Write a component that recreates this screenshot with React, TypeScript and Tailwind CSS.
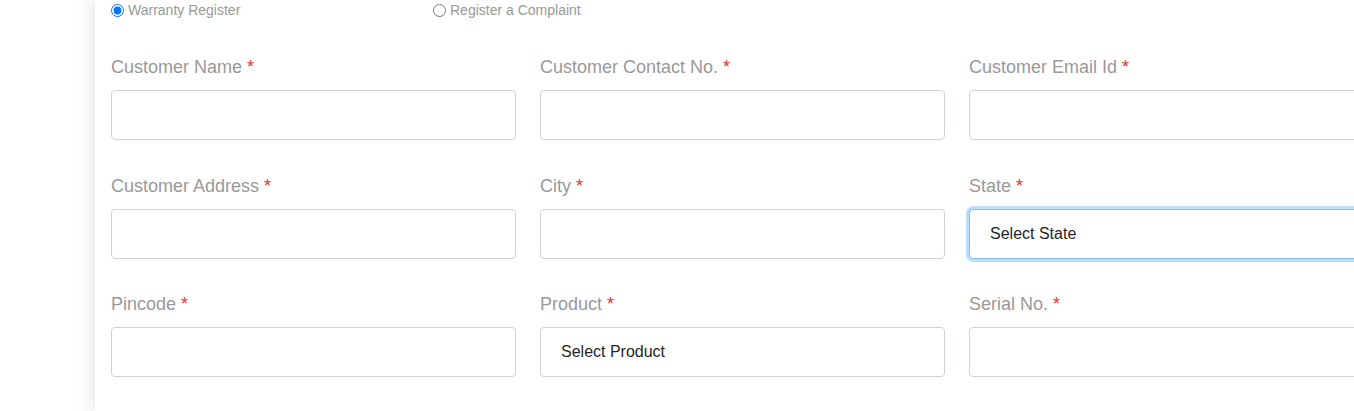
import React from "react"

type Field = { label: string; kind: "input" | "select"; placeholder?: string; focused?: boolean }

const fields: Field[] = [
  { label: "Customer Name", kind: "input" },
  { label: "Customer Contact No.", kind: "input" },
  { label: "Customer Email Id", kind: "input" },
  { label: "Customer Address", kind: "input" },
  { label: "City", kind: "input" },
  { label: "State", kind: "select", placeholder: "Select State", focused: true },
  { label: "Pincode", kind: "input" },
  { label: "Product", kind: "select", placeholder: "Select Product" },
  { label: "Serial No.", kind: "input" },
]

function FormField({ f }: { f: Field }) {
  const base = "h-[50px] w-full rounded-[4px] border bg-white outline-none"
  const state = f.focused
    ? " border-[#80bdff] shadow-[0_0_0_3px_rgba(0,123,255,0.25)]"
    : " border-[#ced4da]"
  return (
    <div className="flex flex-col">
      <label className="mb-[9px] text-[18px] leading-[28px] text-[#999999]">
        {f.label} <span className="text-[#e3342f]">*</span>
      </label>
      {f.kind === "select" ? (
        <div className={base + state + " flex items-center px-[20px] text-[16px] text-[#212529]"}>
          {f.placeholder}
        </div>
      ) : (
        <input type="text" className={base + state + " px-[20px] text-[16px]"} />
      )}
    </div>
  )
}

export default function App() {
  return (
    <div className="h-[411px] w-[1354px] overflow-hidden bg-white font-['Liberation_Sans',Arial,sans-serif]">
      <div className="ml-[95px] h-full w-[1295px] bg-white pl-[16px] shadow-[-6px_0_14px_rgba(0,0,0,0.08)]">
        <div className="flex h-[20px] items-center pt-[1px] text-[14px] text-[#999999]">
          <label className="flex w-[322px] items-center">
            <input type="radio" name="mode" defaultChecked className="m-0 mr-[4px] h-[13px] w-[13px]" />
            Warranty Register
          </label>
          <label className="flex items-center">
            <input type="radio" name="mode" className="m-0 mr-[4px] h-[13px] w-[13px]" />
            Register a Complaint
          </label>
        </div>

        <div className="mt-[33px] grid w-[1263px] grid-cols-3 gap-x-[24px] gap-y-[31.5px]">
          {fields.map(f => (
            <FormField key={f.label} f={f} />
          ))}
        </div>
      </div>
    </div>
  )
}
